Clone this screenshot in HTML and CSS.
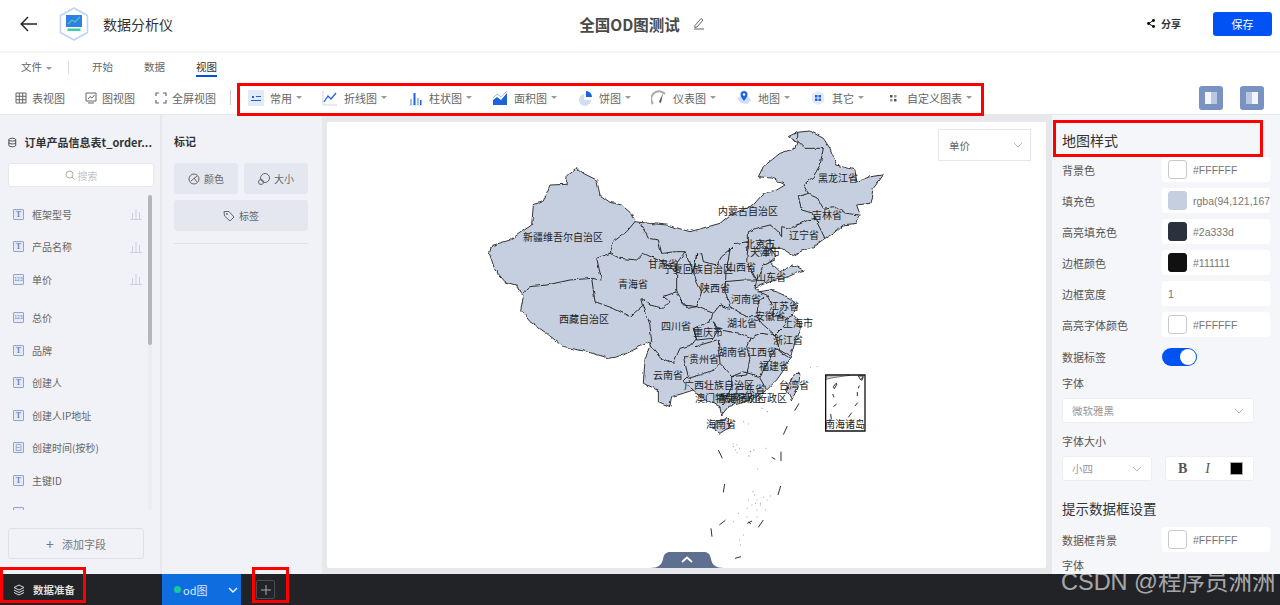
FILE: index.html
```html
<!DOCTYPE html>
<html lang="zh-CN">
<head>
<meta charset="utf-8">
<title>全国OD图测试</title>
<link rel="stylesheet" href="styles.css">
</head>
<body>
<div class="app">
  <header class="header">
    <div class="brand">
      <svg class="back" viewBox="0 0 18 16"><path d="M17 8H1.5M8 1 1.2 8 8 15" fill="none" stroke="#222" stroke-width="1.4"/></svg>
      <svg class="logo" viewBox="0 0 32 34"><path d="M16 1 29.5 8.5V25.500L16 33 2.500 25.500V8.500Z" fill="#fff" stroke="#bcd2f7" stroke-width="1.500" stroke-linejoin="round"/><rect x="8" y="8" width="16" height="12" fill="#2f7fe6"/><path d="M10 17 14 13 17 15 22 10" fill="none" stroke="#3fd0a8" stroke-width="1.300"/><rect x="9.500" y="21.500" width="13" height="2.500" fill="#3ecdaa"/></svg>
      <span class="app-name">数据分析仪</span>
    </div>
    <div class="doc-title">
      <span>全国OD图测试</span>
      <svg class="pencil" viewBox="0 0 12 13"><path d="M2 8.500 8 1.500 10 3 4 10 1.800 10.500ZM1 12H11" fill="none" stroke="#555" stroke-width=".9"/></svg>
    </div>
    <div class="actions">
      <svg class="share" viewBox="0 0 8 9"><circle cx="6.500" cy="1.500" r="1.400"/><circle cx="1.500" cy="4.500" r="1.400"/><circle cx="6.500" cy="7.500" r="1.400"/><path d="M6.500 1.500 1.500 4.500 6.500 7.500" fill="none" stroke="#111"/></svg>
      <span class="share-text">分享</span>
      <button class="save">保存</button>
    </div>
  </header>

  <section class="ribbon">
    <nav class="tabs">
      <span class="tab tab-file">文件<i class="caret"></i></span>
      <span class="tab-sep"></span>
      <span class="tab">开始</span>
      <span class="tab">数据</span>
      <span class="tab tab-active">视图</span>
    </nav>
    <div class="tools">
      <span class="view-tool"><svg class="ic" viewBox="0 0 12 12"><path d="M1 1H11V11H1ZM1 4.300H11M1 7.700H11M4.300 1V11M7.700 1V11" fill="none" stroke="#666" stroke-width="1"/></svg>表视图</span>
      <span class="view-tool"><svg class="ic" viewBox="0 0 12 12"><path d="M1 1H11V9H1ZM3 7 5 4.500 7 6 9.500 3M3 11H9" fill="none" stroke="#666" stroke-width="1"/></svg>图视图</span>
      <span class="view-tool"><svg class="ic" viewBox="0 0 12 12"><path d="M1 4V1H4M8 1H11V4M11 8V11H8M4 11H1V8" fill="none" stroke="#666" stroke-width="1.200"/></svg>全屏视图</span>
      <span class="tool-sep"></span>
      <div class="charts">
        <span class="chart"><svg class="cic" viewBox="0 0 16 16"><rect width="16" height="16" fill="#e3e9f6"/><path d="M4 6h2v2H4zM3 10h10v1H3zM8 6h5v1H8z" fill="#1f62e0"/></svg>常用<i class="caret"></i></span>
        <span class="chart"><svg class="cic" viewBox="0 0 16 16"><path d="M1 1V15H15" fill="none" stroke="#ccd5e8"/><path d="M2 12 6 6 9 9 14 3" fill="none" stroke="#1f62e0" stroke-width="1.300"/></svg>折线图<i class="caret"></i></span>
        <span class="chart"><svg class="cic" viewBox="0 0 16 16"><path d="M2 15H15" stroke="#ccd5e8"/><path d="M3 9h2v6H3zM10 8h2v7h-2z" fill="#a9c0ee"/><path d="M6.500 3h2v12h-2zM13 10h1.500v5H13z" fill="#1f62e0"/></svg>柱状图<i class="caret"></i></span>
        <span class="chart"><svg class="cic" viewBox="0 0 16 16"><path d="M1 15V10L5 7 9 10 15 3V15Z" fill="#1f62e0"/><path d="M1 8 5 4 9 7 15 1" fill="none" stroke="#a9c0ee"/></svg>面积图<i class="caret"></i></span>
        <span class="chart"><svg class="cic" viewBox="0 0 16 16"><path d="M7 4A6 6 0 1 0 14 10H7Z" fill="#d3def4"/><path d="M9 1A6 6 0 0 1 15 7H9Z" fill="#1f62e0"/></svg>饼图<i class="caret"></i></span>
        <span class="chart"><svg class="cic" viewBox="0 0 16 16"><path d="M2 14A7 7 0 0 1 14 4" fill="none" stroke="#aaa" stroke-width="2"/><path d="M8 12 12 3 10 13Z" fill="#555"/></svg>仪表图<i class="caret"></i></span>
        <span class="chart"><svg class="cic" viewBox="0 0 16 16"><path d="M1 9 5 5 12 6 15 10 11 14 5 13Z" fill="#d3def4"/><path d="M8 1A3.500 3.500 0 0 1 11.500 4.500C11.500 7 8 11 8 11S4.500 7 4.500 4.500A3.500 3.500 0 0 1 8 1Z" fill="#1f62e0"/><circle cx="8" cy="4.500" r="1.300" fill="#fff"/></svg>地图<i class="caret"></i></span>
        <span class="chart"><svg class="cic" viewBox="0 0 16 16"><path d="M8 1 14 4V12L8 15 2 12V4Z" fill="#e3e9f6"/><path d="M5 5h2.500v2.500H5zM8.500 5H11v2.500H8.500zM5 8.500h2.500V11H5zM8.500 8.500H11V11H8.500z" fill="#1f62e0"/></svg>其它<i class="caret"></i></span>
        <span class="chart chart-custom"><svg class="cic" viewBox="0 0 16 16"><path d="M4 5h2.500v2.500H4zM8 9h2.500v2.500H8z" fill="#555"/><path d="M8 5h2.500v2.500H8zM4 9h2.500v2.500H4z" fill="#999"/></svg>自定义图表<i class="caret"></i></span>
      </div>
      <div class="layout-btns">
        <span class="layout-btn"><i class="pane-a"></i><i class="pane-b"></i></span>
        <span class="layout-btn"><i class="pane-b"></i><i class="pane-a"></i></span>
      </div>
    </div>
  </section>

  <main class="main">
    <aside class="fields">
      <div class="fields-title">
        <svg class="db" viewBox="0 0 10 11"><ellipse cx="5" cy="2.200" rx="4" ry="1.700" fill="none" stroke="#333"/><path d="M1 2.200V8.800C1 11 9 11 9 8.800V2.200M1 5.500C1 7.700 9 7.700 9 5.500" fill="none" stroke="#333"/></svg>
        <span>订单产品信息表t_order...</span>
      </div>
      <div class="search"><svg class="search-ic" viewBox="0 0 10 10"><circle cx="4.500" cy="4.500" r="3.500" fill="none" stroke="#aaa"/><path d="M7 7 9.500 9.500" stroke="#aaa"/></svg>搜索</div>
      <div class="field-list">
        <div class="list-items">
          <div class="item"><i class="type">T</i><span class="item-name">框架型号</span><svg class="bars" viewBox="0 0 12 12"><path d="M0 11.500H12M2.500 5V11M6 1V11M9.500 4V11" fill="none" stroke="#ccd0d8"/></svg></div>
          <div class="item"><i class="type">T</i><span class="item-name">产品名称</span><svg class="bars" viewBox="0 0 12 12"><path d="M0 11.500H12M2.500 5V11M6 1V11M9.500 4V11" fill="none" stroke="#ccd0d8"/></svg></div>
          <div class="item item-gap"><i class="type type-num">123</i><span class="item-name">单价</span><svg class="bars" viewBox="0 0 12 12"><path d="M0 11.500H12M2.500 5V11M6 1V11M9.500 4V11" fill="none" stroke="#ccd0d8"/></svg></div>
          <div class="item"><i class="type type-num">123</i><span class="item-name">总价</span></div>
          <div class="item"><i class="type">T</i><span class="item-name">品牌</span></div>
          <div class="item"><i class="type">T</i><span class="item-name">创建人</span></div>
          <div class="item"><i class="type">T</i><span class="item-name">创建人IP地址</span></div>
          <div class="item"><i class="type type-date">曰</i><span class="item-name">创建时间(按秒)</span></div>
          <div class="item"><i class="type">T</i><span class="item-name">主键ID</span></div>
          <div class="item"><i class="type type-blank"></i></div>
        </div>
        <div class="scroll"><div class="thumb"></div></div>
      </div>
      <button class="add-field"><span class="plus">+</span>添加字段</button>
    </aside>

    <aside class="marks">
      <div class="marks-title">标记</div>
      <div class="mark-grid">
        <span class="mark"><svg class="mark-ic" viewBox="0 0 12 12"><circle cx="6" cy="6" r="5" fill="none" stroke="#666"/><path d="M3 8 9 3M6 5l3 4" stroke="#666"/></svg>颜色</span>
        <span class="mark"><svg class="mark-ic" viewBox="0 0 12 12"><circle cx="7" cy="5" r="4.500" fill="none" stroke="#666"/><circle cx="3" cy="9" r="2.500" fill="none" stroke="#666"/></svg>大小</span>
        <span class="mark mark-wide"><svg class="mark-ic" viewBox="0 0 12 12"><path d="M1 1.500H6L11 7 7 11 1.500 6Z" fill="none" stroke="#666"/><circle cx="4" cy="4" r=".9" fill="#666"/></svg>标签</span>
      </div>
      <div class="marks-rule"></div>
    </aside>

    <section class="stage">
      <div class="card">
        <svg class="map" viewBox="327 122 719 446">
          <defs>
            <filter id="rough" x="327" y="122" width="719" height="446" filterUnits="userSpaceOnUse">
              <feTurbulence type="fractalNoise" baseFrequency=".16" numOctaves="2" seed="4"/>
              <feDisplacementMap in="SourceGraphic" scale="3.500" xChannelSelector="R" yChannelSelector="G"/>
            </filter>
          </defs>
          <g class="rough">
          <g transform="translate(480 125) scale(.33333)">
            <path class="land" d="M465 290 450 262 425 240 390 232 360 210 350 165 310 145 290 128 262 150 258 178 210 180 190 228 160 240 155 300 90 345 35 362 28 385 45 435 75 470 110 480 120 505 130 515 122 555 150 590 200 625 250 665 320 680 390 700 430 690 480 665 510 650 510 660 495 705 490 775 535 795 535 830 570 845 575 815 610 805 640 795 665 820 700 835 720 845 725 870 745 845 780 835 830 815 860 795 890 765 915 730 930 700 945 650 960 620 960 590 940 570 950 540 930 520 900 505 870 495 835 500 825 490 870 470 925 455 970 435 940 420 920 430 900 440 870 410 890 395 870 370 905 370 940 392 960 380 1000 365 1035 340 1060 325 1090 300 1130 295 1140 270 1130 240 1170 235 1180 190 1210 150 1170 155 1130 170 1125 135 1070 120 1050 70 1030 40 990 18 950 22 925 35 950 50 945 70 900 85 850 125 835 155 880 160 915 180 890 195 850 205 820 240 750 270 720 295 630 320 560 300 480 292Z"/>
            <path class="land" d="M705 890 745 880 750 905 720 925 705 915Z"/>
            <path class="land" d="M925 780 945 745 960 745 955 785 935 825 920 795Z"/>
            <path class="border" d="M465 290 440 320 400 350 390 385 350 400 365 465 335 460 270 465 200 480 150 485 125 505M335 460 345 530 400 550 450 575 490 540 485 520 510 540 550 550 570 530 550 515 590 500 590 440 545 410 490 385 470 405 420 400 390 385M480 292 505 340 535 345 545 385 590 380 615 380 590 415 590 440M490 540 510 600 515 650 510 660M510 655 545 700 580 715 600 670 635 660 650 640 640 610 690 590 700 565 650 545 625 550 590 510M650 545 665 500 650 470 640 440 650 390 665 385 670 410 710 420 725 395 750 375 770 355 805 350 805 320 830 310 870 300 890 315 905 335 905 305 930 310 985 285 1005 280 1000 265 965 255 955 215 985 205 970 180 1000 155 1020 120 1030 70 975 70 950 45 950 22M985 205 1010 215 1030 250 1060 245 1100 265 1135 270M1005 280 1025 320 1035 340M805 350 800 410 830 465 850 420 885 405M750 375 738 440 735 500 750 545 800 575 830 575 835 530 860 510 835 500M735 470 790 465 830 465 825 490M700 565 720 540 750 550M700 590 720 615 780 625 810 640 840 625 885 630 845 595 830 575M860 510 880 545 880 570 920 580 940 570M885 630 915 600 920 580M885 630 900 680 930 700M885 670 930 690M810 640 800 665 810 700 800 750 755 755 755 785 730 840M885 675 850 735 840 760 860 795M755 755 790 740 840 755M715 645 720 715 755 755M625 760 660 750 700 735 720 715M645 665 710 645M625 695 610 695 625 755 610 770 640 795M640 610 650 645 700 640 715 620 700 590M590 500 610 540 650 545M650 390 640 440 630 420 615 380"/>
            <path class="border border-fine" d="M840 350 870 345 880 365 865 390 845 385 830 370ZM850 360 878 378 860 368 848 380 870 384 855 372"/>
            <path class="border border-fine" d="M730 820 760 805 800 810 780 825 745 830 770 815 720 815"/>
          </g>
          </g>
          <g transform="translate(600 340) scale(.33333)">
            <path class="border" d="M355 330 367 355M374 432 370 457M333 565 336 590M358 555 375 542M405 655 423 650M490 540 475 562M542 438 534 465M543 335 543 363M515 352 526 358M562 258 550 284M597 190 584 212"/>
            <path class="specks" d="M400 320h2M410 315h2M405 330h2M418 325h2M410 338h2M398 312h2M450 335h3M460 330h3M445 348h3M497 325h2M472 387h2M458 455h2M462 465h2M445 480h2M470 480h2M490 472h2M510 468h2M500 480h2M480 495h2M455 495h2M440 505h2M470 510h2M495 510h2M415 520h2M400 545h2M440 530h2M470 530h2M480 490h2M465 490h2M375 540h2M418 600h2M420 615h2M430 585h2M485 205h3M500 215h3M630 82h2M650 80h2M430 245h2M445 252h2"/>
            <path class="border" d="M442 550 456 543M446 545 452 552"/>
            <rect class="inset" x="677" y="105" width="118" height="168"/>
            <path class="land-inset" d="M678 118C700 112 720 110 750 106L680 107Z"/>
            <path class="border" d="M700 140 708 130 711 132 703 146ZM698 162 702 172M700 200 710 192M692 222 694 238M745 232 755 218M765 198 773 188M772 156V168M775 145 778 137M785 122 790 112M775 108 790 108 782 120Z"/>
          </g>
          <g class="labels">
            <text x="838" y="177">黑龙江省</text><text x="748" y="210">内蒙古自治区</text><text x="827" y="214">吉林省</text><text x="563" y="236">新疆维吾尔自治区</text><text x="804" y="234">辽宁省</text><text x="760" y="243">北京市</text><text x="765" y="251">天津市</text><text x="663" y="263">甘肃省</text><text x="698" y="268">宁夏回族自治区</text><text x="741" y="266">山西省</text><text x="633" y="283">青海省</text><text x="771" y="276">山东省</text><text x="715" y="287">陕西省</text><text x="746" y="298">河南省</text><text x="784" y="305">江苏省</text><text x="770" y="315">安徽省</text><text x="798" y="322">上海市</text><text x="584" y="318">西藏自治区</text><text x="676" y="325">四川省</text><text x="742" y="322">湖北省</text><text x="708" y="331">重庆市</text><text x="788" y="339">浙江省</text><text x="732" y="351">湖南省</text><text x="762" y="351">江西省</text><text x="704" y="358">贵州省</text><text x="774" y="365">福建省</text><text x="668" y="374">云南省</text><text x="719" y="384">广西壮族自治区</text><text x="750" y="388">广东省</text><text x="794" y="384">台湾省</text><text x="730" y="397">澳门特别行政区</text><text x="752" y="397">香港特别行政区</text><text x="721" y="423">海南省</text><text x="845" y="423">南海诸岛</text>
          </g>
        </svg>
        <div class="metric">单价<svg class="chev" viewBox="0 0 10 6"><path d="M1 1 5 5 9 1" fill="none" stroke="#bbb"/></svg></div>
        <div class="collapse"><svg viewBox="0 0 74 17"><path d="M0 17C8 17 12 14 13 8 14 3 16 1 20 1H54C58 1 60 3 61 8 62 14 66 17 74 17Z" fill="#5e6f8f"/><path d="M32 11 37 6.500 42 11" fill="none" stroke="#fff" stroke-width="1.800"/></svg></div>
      </div>
    </section>

    <aside class="props">
      <h2 class="props-title">地图样式</h2>
      <div class="row"><label>背景色</label><div class="val"><i class="sw"></i>#FFFFFF</div></div>
      <div class="row"><label>填充色</label><div class="val val-clip"><i class="sw sw-fill"></i>rgba(94,121,167</div></div>
      <div class="row"><label>高亮填充色</label><div class="val"><i class="sw sw-dark"></i>#2a333d</div></div>
      <div class="row"><label>边框颜色</label><div class="val"><i class="sw sw-black"></i>#111111</div></div>
      <div class="row"><label>边框宽度</label><div class="val val-num">1</div></div>
      <div class="row"><label>高亮字体颜色</label><div class="val"><i class="sw"></i>#FFFFFF</div></div>
      <div class="row row-toggle"><label>数据标签</label><span class="toggle"><i></i></span></div>
      <div class="sub">字体</div>
      <div class="select select-full">微软雅黑<svg class="chev" viewBox="0 0 10 6"><path d="M1 1 5 5 9 1" fill="none" stroke="#bbb"/></svg></div>
      <div class="sub sub-size">字体大小</div>
      <div class="font-row">
        <div class="select select-size">小四<svg class="chev" viewBox="0 0 10 6"><path d="M1 1 5 5 9 1" fill="none" stroke="#bbb"/></svg></div>
        <div class="style-box"><b>B</b><em>I</em><i class="black"></i></div>
      </div>
      <h3 class="props-sub">提示数据框设置</h3>
      <div class="row"><label>数据框背景</label><div class="val"><i class="sw"></i>#FFFFFF</div></div>
      <div class="sub sub-last">字体</div>
    </aside>
  </main>

  <footer class="footer">
    <div class="prep"><svg class="layers" viewBox="0 0 12 12"><path d="M6 1 11 3.500 6 6 1 3.500ZM1 6 6 8.500 11 6M1 8.500 6 11 11 8.500" fill="none" stroke="#ddd"/></svg>数据准备</div>
    <div class="sheet"><i class="dot"></i><span>od图</span><svg class="sheet-chev" viewBox="0 0 10 6"><path d="M1 1 5 5 9 1" fill="none" stroke="#fff" stroke-width="1.300"/></svg></div>
    <div class="add-sheet"><svg viewBox="0 0 10 10"><path d="M5 0V10M0 5H10" stroke="#aaa"/></svg></div>
  </footer>

  <div class="anno anno-tools"></div>
  <div class="anno anno-title"></div>
  <div class="anno anno-prep"></div>
  <div class="anno anno-add"></div>
  <div class="watermark">CSDN @程序员洲洲</div>
</div>
</body>
</html>
```
FILE: styles.css
```css
* { box-sizing: border-box; }
html, body { margin: 0; height: 100%; }
body {
  font-family: "Noto Sans CJK SC", "Liberation Sans", sans-serif;
  font-size: 11px;
  color: #555;
  background: #fff;
  overflow: hidden;
}
i, em { font-style: normal; }
.app { position: relative; width: 1280px; height: 605px; display: flex; flex-direction: column; overflow: hidden; }

/* header */
.header {
  height: 53px; flex: none;
  display: grid; grid-template-columns: 1fr auto 1fr; align-items: center;
  border-bottom: 2px solid #f3f4f6;
  padding: 0 8px 4px 20px;
}
.brand { display: flex; align-items: center; }
.back { width: 18px; height: 16px; }
.logo { width: 32px; height: 34px; margin-left: 20px; }
.app-name { margin-left: 13px; font-size: 14px; color: #333; }
.doc-title { display: flex; align-items: center; font-size: 15.500px; font-weight: 700; color: #4a4a4a; margin-right: 8px; }
.pencil { width: 12px; height: 13px; margin-left: 13px; }
.actions { display: flex; align-items: center; justify-content: flex-end; }
.share { width: 8px; height: 9px; }
.share-text { margin-left: 6px; font-size: 10px; font-weight: 700; color: #333; }
.save {
  width: 59px; height: 24px; margin-left: 32px; border: 0; border-radius: 3px;
  background: #0052f5; color: #fff; font: 11px "Noto Sans CJK SC", sans-serif;
}

/* ribbon */
.ribbon { height: 62px; flex: none; border-bottom: 1px solid #e5e7eb; }
.tabs { height: 28px; display: flex; align-items: center; padding-left: 21px; }
.tab { position: relative; font-size: 10.500px; color: #666; line-height: 28px; margin-right: 31px; width: 21px; white-space: nowrap; }
.tab-file { width: auto; margin-right: 16px; }
.tab-sep { width: 1px; height: 13px; background: #ddd; margin-right: 23px; }
.tab-active { color: #333; }
.tab-active::after { content: ""; position: absolute; left: 0; right: 0; bottom: 4px; height: 2px; background: #0052d9; }
.caret {
  display: inline-block; width: 0; height: 0; margin-left: 4px; vertical-align: middle;
  border-left: 3px solid transparent; border-right: 3px solid transparent; border-top: 3px solid #999;
}
.tools { height: 33px; display: flex; align-items: center; padding-left: 15px; }
.view-tool { display: flex; align-items: center; font-size: 11px; color: #666; margin-right: 20px; white-space: nowrap; }
.ic { width: 12px; height: 12px; margin-right: 5px; }
.tool-sep { width: 1px; height: 15px; background: #ccc; margin: 0 17px 0 -6px; }
.charts { display: flex; align-items: center; gap: 20px; }
.chart { display: flex; align-items: center; font-size: 11px; color: #666; white-space: nowrap; }
.cic { width: 16px; height: 16px; margin-right: 6px; }
.chart-custom { margin-left: 2px; }
.chart-custom .cic { margin-right: 5px; }
.layout-btns { display: flex; gap: 17px; margin-left: auto; padding-right: 16px; }
.layout-btn { width: 24px; height: 24px; border-radius: 3px; background: #7a92c2; display: flex; align-items: center; justify-content: center; }
.pane-a { width: 6px; height: 12px; background: #f2f5fb; }
.pane-b { width: 6px; height: 12px; background: #b9c7e2; }

/* main */
.main { flex: 1; min-height: 0; display: flex; }
.fields { width: 162px; flex: none; background: #f0f2f7; border-right: 2px solid #e6e8ec; padding: 0 8px; display: flex; flex-direction: column; }
.fields-title { display: flex; align-items: center; height: 20px; margin-top: 17px; font-size: 11px; font-weight: 700; color: #333; white-space: nowrap; }
.db { width: 10px; height: 11px; margin-right: 8px; }
.search { margin-top: 11px; height: 24px; width: 146px; background: #fff; border: 1px solid #e6e8ec; border-radius: 3px; display: flex; align-items: center; justify-content: center; font-size: 10px; color: #c3c3c3; }
.search-ic { width: 10px; height: 10px; margin-right: 3px; }
.field-list { position: relative; margin-top: 8px; height: 315px; overflow: hidden; }
.list-items { padding-top: 3px; }
.item { display: flex; align-items: center; height: 32.500px; padding: 0 10px 0 5px; }
.item-gap { margin-bottom: 6px; }
.type { width: 11px; height: 11px; border: 1px solid #8fa5d1; border-radius: 1px; background: #e6ebf6; color: #6d84b8; font: 700 8px/9px "Liberation Serif", serif; text-align: center; flex: none; }
.type-num { font: 5px/9px "Liberation Sans", sans-serif; }
.type-date { font: 7px/9px "Noto Sans CJK SC", sans-serif; }
.item-name { margin-left: 8px; font-size: 10px; color: #666; white-space: nowrap; flex: 1; }
.bars { width: 12px; height: 12px; }
.scroll { position: absolute; top: 0; right: 0; width: 4px; height: 100%; background: #ebedf1; border-radius: 2px; }
.thumb { height: 150px; background: #b4b6ba; border-radius: 2px; }
.add-field { margin-top: 18px; width: 136px; height: 31px; border: 1px solid #dfe1e6; border-radius: 3px; background: #f0f2f7; color: #777; font: 11px "Noto Sans CJK SC", sans-serif; }
.plus { font-size: 14px; margin-right: 8px; vertical-align: -1px; }

.marks { width: 160px; flex: none; background: #f0f2f7; padding: 0 14px 0 12px; }
.marks-title { margin-top: 16px; height: 20px; line-height: 20px; font-size: 11px; font-weight: 700; color: #333; }
.mark-grid { margin-top: 12px; display: grid; grid-template-columns: 64px 64px; gap: 6px; }
.mark { height: 31px; border-radius: 3px; background: #e4e7ef; display: flex; align-items: center; justify-content: center; font-size: 10px; color: #666; }
.mark-wide { grid-column: 1 / 3; }
.mark-ic { width: 12px; height: 12px; margin-right: 4px; }
.marks-rule { margin-top: 12px; height: 1px; background: #dfe1e6; }

.stage { width: 730px; flex: none; background: #e6e8ec; padding: 7px 6px 6px 5px; }
.card { position: relative; height: 100%; background: #fff; border-radius: 2px; }
.map { display: block; width: 100%; height: 100%; }
.rough { filter: url(#rough); }
.land { fill: #c6cfe0; stroke: #222; stroke-width: .9; vector-effect: non-scaling-stroke; stroke-linejoin: round; }
.land-inset { fill: #c6cfe0; stroke: #222; stroke-width: .6; vector-effect: non-scaling-stroke; }
.border { fill: none; stroke: #1a1a1a; stroke-width: .9; vector-effect: non-scaling-stroke; stroke-linejoin: round; }
.border-fine { stroke-width: .7; }
.specks { fill: none; stroke: #444; stroke-width: .7; vector-effect: non-scaling-stroke; }
.inset { fill: #fff; stroke: #111; stroke-width: 1.300; vector-effect: non-scaling-stroke; }
.labels text { font-size: 10px; fill: #222; text-anchor: middle; dominant-baseline: central; }
.metric { position: absolute; top: 7px; right: 15px; width: 93px; height: 32px; padding: 0 7px 0 10px; background: #fff; border: 1px solid #e6e6e6; display: flex; align-items: center; justify-content: space-between; font-size: 10.500px; color: #666; }
.chev { width: 10px; height: 6px; }
.collapse { position: absolute; left: 323px; bottom: 0; width: 74px; height: 17px; }
.collapse svg { display: block; width: 100%; height: 100%; }

/* right panel */
.props { flex: 1; min-width: 0; background: #f5f6f9; padding: 0 10px; overflow: hidden; }
.props-title { margin: 15px 0 0; height: 21px; line-height: 21px; font-size: 14px; font-weight: 400; color: #333; }
.row { display: flex; align-items: center; height: 25px; margin-top: 6px; }
.props-title + .row { margin-top: 6px; }
.row label { width: 100px; flex: none; font-size: 11px; color: #555; }
.val { width: 108px; height: 25px; background: #fff; border-radius: 3px; display: flex; align-items: center; padding-left: 6px; font: 10.500px "Liberation Sans", sans-serif; color: #777; overflow: hidden; white-space: nowrap; }
.val-num { padding-left: 6px; }
.sw { width: 19px; height: 19px; flex: none; border: 1px solid #c9c9c9; border-radius: 3px; background: #fff; margin-right: 6px; }
.sw-fill { background: #c6cfe0; border-color: #c6cfe0; }
.sw-dark { background: #2a333d; border-color: #2a333d; }
.sw-black { background: #111; border-color: #111; }
.row-toggle { height: 18px; margin-top: 11px; }
.toggle { position: relative; width: 35px; height: 18px; border-radius: 9px; background: #0052f5; }
.toggle i { position: absolute; right: 1px; top: 1px; width: 16px; height: 16px; border-radius: 50%; background: #fff; }
.sub { margin-top: 9px; height: 17px; line-height: 17px; font-size: 11px; color: #555; }
.select { height: 25px; background: #fff; border: 1px solid #eceef2; border-radius: 3px; display: flex; align-items: center; justify-content: space-between; padding: 0 9px; font-size: 10.500px; color: #999; }
.select-full { width: 192px; margin-top: 6px; }
.sub-size { margin-top: 10px; }
.font-row { display: flex; gap: 13px; margin-top: 6px; }
.select-size { width: 90px; }
.style-box { width: 89px; height: 25px; background: #fff; border: 1px solid #eceef2; border-radius: 3px; display: flex; align-items: center; gap: 18px; padding-left: 12px; font: 14px "Liberation Serif", serif; color: #555; }
.style-box em { font-style: italic; width: 5px; }
.black { width: 11px; height: 11px; background: #000; outline: 1px solid #aaa; margin-left: 3px; }
.props-sub { margin: 17px 0 0; height: 20px; line-height: 20px; font-size: 13.500px; font-weight: 400; color: #333; }
.props-sub + .row { margin-top: 9px; }
.sub-last { margin-top: 5px; }

/* footer */
.footer { height: 31px; flex: none; background: #212326; display: flex; align-items: center; }
.prep { width: 162px; height: 100%; display: flex; align-items: center; padding-left: 13px; font-size: 10.500px; font-weight: 700; color: #ddd; }
.layers { width: 12px; height: 12px; margin-right: 8px; }
.sheet { width: 79px; height: 100%; background: #0e6ee0; display: flex; align-items: center; padding-left: 12px; font-size: 11px; color: #dce8fa; }
.dot { width: 7px; height: 7px; border-radius: 50%; background: #14c99a; margin-right: 2px; }
.sheet-chev { width: 10px; height: 6px; margin-left: auto; margin-right: 3px; }
.add-sheet { width: 19px; height: 19px; margin-left: 15px; border: 1px solid #4a4c50; border-radius: 2px; display: flex; align-items: center; justify-content: center; }
.add-sheet svg { width: 10px; height: 10px; }

/* annotations drawn over the screenshot */
.anno { position: absolute; border: 3px solid #f00; pointer-events: none; }
.anno-tools { left: 237px; top: 83px; width: 747px; height: 33px; }
.anno-title { left: 1053px; top: 120px; width: 210px; height: 37px; }
.anno-prep { left: 0; top: 567px; width: 86px; height: 36px; }
.anno-add { left: 252px; top: 567px; width: 37px; height: 36px; }
.watermark { position: absolute; left: 1061px; top: 566px; font: 23.500px/32px "Liberation Sans", "Noto Sans CJK SC", sans-serif; color: rgba(255,255,255,.62); white-space: nowrap; }
```
